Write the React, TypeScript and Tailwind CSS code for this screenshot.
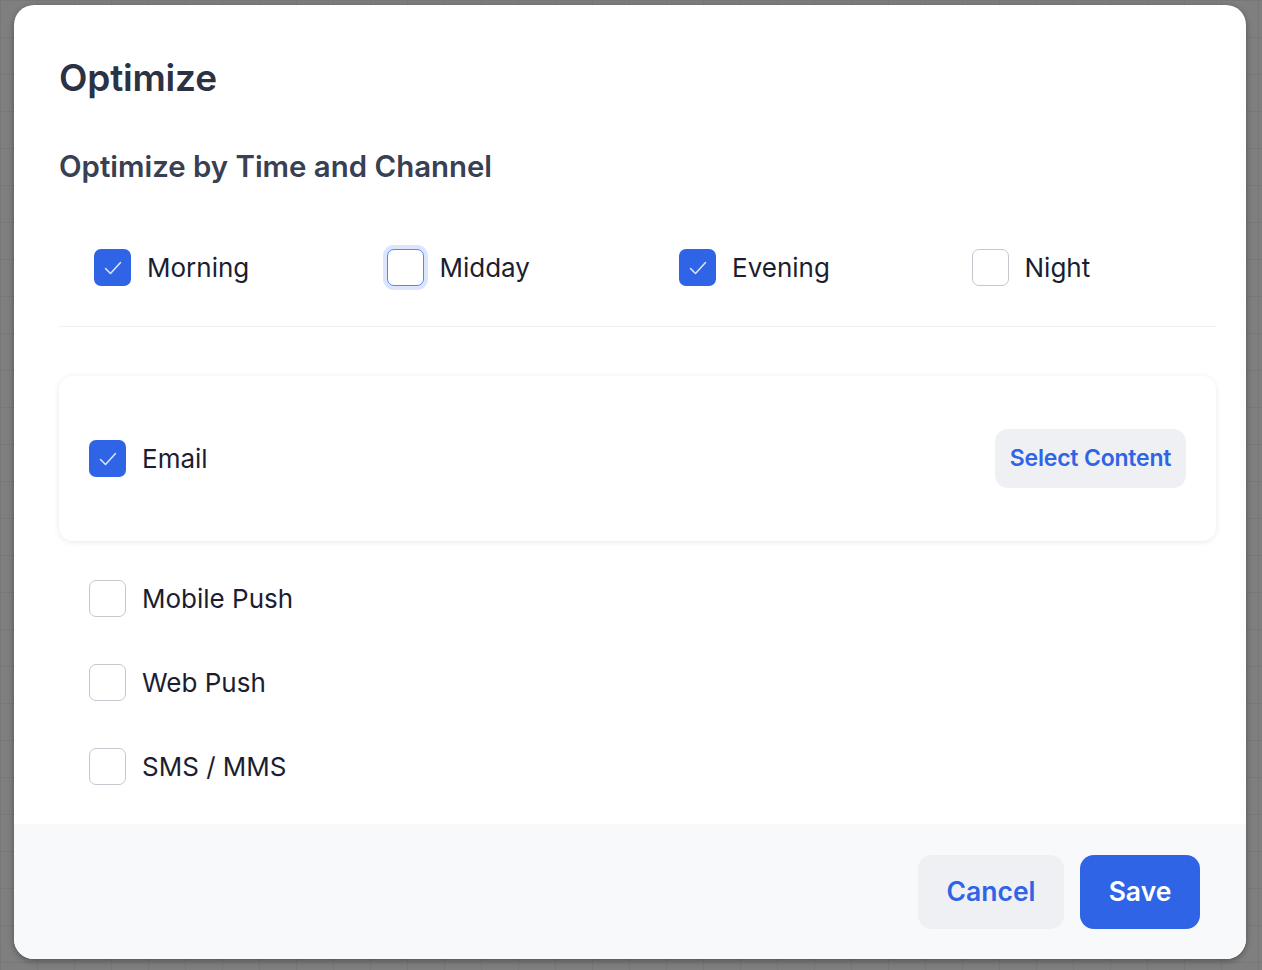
import { useState } from 'react'

const font = { fontFamily: 'Inter, "Noto Sans", sans-serif' }

function Box({ checked, focused }: { checked: boolean; focused?: boolean }) {
  if (checked) {
    return (
      <span className="flex h-[37px] w-[37px] shrink-0 items-center justify-center rounded-[7px] bg-[#2f64e6]">
        <svg width="22" height="22" viewBox="0 0 22 22" fill="none">
          <path d="M3.5 11.5l5 5L18.5 5.5" stroke="#dfe6fb" strokeWidth="1.5" strokeLinecap="round" strokeLinejoin="round" />
        </svg>
      </span>
    )
  }
  return (
    <span
      className={
        focused
          ? 'h-[37px] w-[37px] shrink-0 rounded-[7px] border-[1.5px] border-[#5b86f0] bg-white ring-4 ring-[#dce5fc]'
          : 'h-[37px] w-[37px] shrink-0 rounded-[7px] border-[1.5px] border-[#c4c7ce] bg-white'
      }
    />
  )
}

function Check({ label, checked, focused, onClick }: { label: string; checked: boolean; focused?: boolean; onClick: () => void }) {
  return (
    <button onClick={onClick} className="flex items-center gap-[16px] text-left">
      <Box checked={checked} focused={focused} />
      <span className="text-[26px] leading-[32px] text-[#1b1e30]">{label}</span>
    </button>
  )
}

export default function App() {
  const [times, setTimes] = useState<Record<string, boolean>>({ Morning: true, Midday: false, Evening: true, Night: false })
  const [channels, setChannels] = useState<Record<string, boolean>>({ Email: true, 'Mobile Push': false, 'Web Push': false, 'SMS / MMS': false })

  const toggleTime = (k: string) => setTimes({ ...times, [k]: !times[k] })
  const toggleChannel = (k: string) => setChannels({ ...channels, [k]: !channels[k] })

  return (
    <div
      style={font}
      className="min-h-[970px] bg-[#7f7f7f] bg-[linear-gradient(#787878_1px,transparent_1px),linear-gradient(90deg,#787878_1px,transparent_1px)] bg-[size:37px_37px] pl-[14px] pt-[5px]"
    >
      <div className="flex h-[954px] w-[1232px] flex-col overflow-hidden rounded-[20px] bg-white shadow-[0_2px_6px_rgba(0,0,0,0.35)]">
        <div className="flex-1 pl-[45px] pr-[30px] pt-[51px]">
          <h1 className="text-[37px] font-semibold leading-[44px] tracking-[-0.2px] text-[#2b3244]">Optimize</h1>
          <h2 className="mt-[49px] text-[29.4px] font-semibold leading-[36px] text-[#394051]">Optimize by Time and Channel</h2>

          {/* time of day */}
          <div className="mt-[64px] flex pl-[35px]">
            {['Morning', 'Midday', 'Evening', 'Night'].map((t) => (
              <div key={t} className="w-[292.5px] shrink-0">
                <Check label={t} checked={times[t]} focused={t === 'Midday'} onClick={() => toggleTime(t)} />
              </div>
            ))}
          </div>

          <div className="mt-[40px] h-px bg-[#eef0f3]" />

          {/* channels */}
          <div className="mt-[49px] flex h-[165px] items-center justify-between rounded-[14px] bg-white px-[30px] shadow-[0_1px_6px_rgba(0,0,0,0.09)]">
            <Check label="Email" checked={channels['Email']} onClick={() => toggleChannel('Email')} />
            <button className="h-[59px] w-[191px] rounded-[13px] bg-[#eff0f4] text-[23px] font-semibold tracking-[-0.2px] text-[#2f64e6]">
              Select Content
            </button>
          </div>

          <div className="mt-[39px] flex flex-col gap-[47px] pl-[30px]">
            {['Mobile Push', 'Web Push', 'SMS / MMS'].map((c) => (
              <Check key={c} label={c} checked={channels[c]} onClick={() => toggleChannel(c)} />
            ))}
          </div>
        </div>

        <div className="flex h-[135px] items-center justify-end gap-[16px] bg-[#f8f9fa] pr-[46px]">
          <button className="h-[74px] w-[146px] rounded-[14px] bg-[#eff0f4] text-[26.5px] font-semibold text-[#2f64e6]">Cancel</button>
          <button className="h-[74px] w-[120px] rounded-[14px] bg-[#2f64e6] text-[26.5px] font-semibold text-white">Save</button>
        </div>
      </div>
    </div>
  )
}
